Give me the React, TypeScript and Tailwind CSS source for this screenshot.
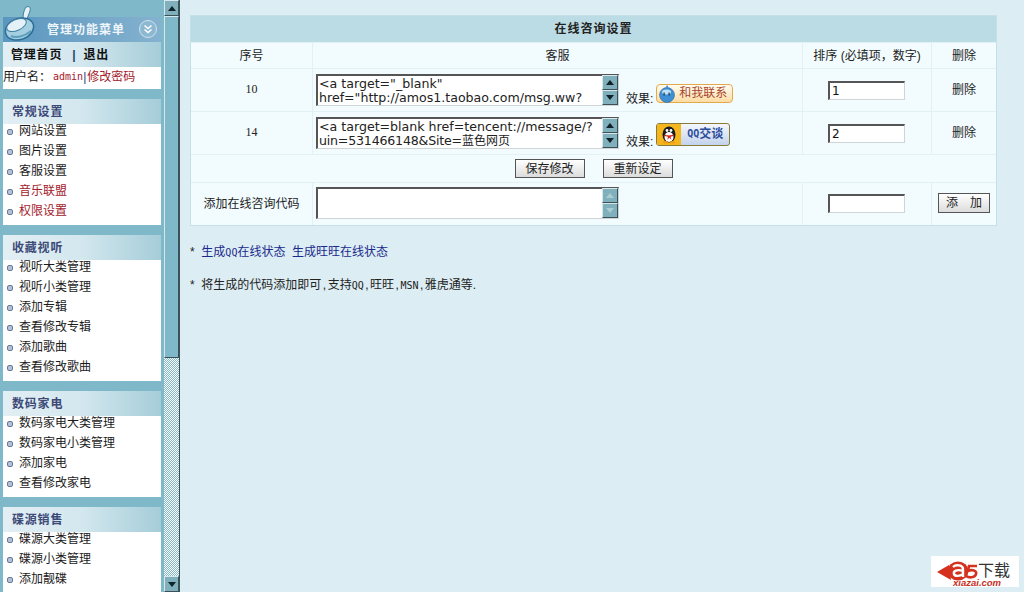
import React from "react";

const cjk = "font-['Liberation_Sans','Noto_Sans_CJK_SC',sans-serif]";
const mono = "font-['DejaVu_Sans_Mono',monospace] text-[10px] leading-none";

function Bowl() {
  return (
    <svg width="36" height="36" viewBox="0 0 36 36" className="absolute -left-[1px] -top-[12px]">
      <path d="M24 2c3-1 5 0 4 4l-3 8-4-1c0-4 1-8 3-11z" fill="#e8f3f6" stroke="#3f7da0" strokeWidth="1" />
      <ellipse cx="17.5" cy="24" rx="14.5" ry="10.5" fill="#a3cfe0" stroke="#2c6d96" strokeWidth="1.5" transform="rotate(-20 17.5 24)" />
      <ellipse cx="14.5" cy="20" rx="10.5" ry="5.5" fill="#e4f1f6" stroke="#3f7da0" strokeWidth="1" transform="rotate(-24 14.5 20)" />
      <path d="M9 31c5 2 13 1 20-5" fill="none" stroke="#5d9dbd" strokeWidth="2" />
    </svg>
  );
}

function Chevrons() {
  return (
    <span className="absolute right-[4px] top-[3px] flex h-[18px] w-[18px] items-center justify-center rounded-full border border-[#cfe3ee] bg-[#8db8d2]">
      <svg width="10" height="10" viewBox="0 0 10 10" fill="none" stroke="#ffffff" strokeWidth="1.5">
        <path d="M1.5 1.5 5 4.5 8.5 1.5" />
        <path d="M1.5 5.5 5 8.5 8.5 5.5" />
      </svg>
    </span>
  );
}

function Section({ title, items }: { title: string; items: { t: string; red?: boolean }[] }) {
  return (
    <div className="mx-[3px] mb-[10px] w-[158px] bg-white pb-[5px]">
      <div className="mb-[-4px] h-[25px] bg-gradient-to-r from-[#e2eff4] via-[#d3e7ee] to-[#a5cdd9] pl-[9px] pt-[5px] text-[12px] leading-[16px] font-bold tracking-[0.8px] text-[#3d4a78]">
        {title}
      </div>
      {items.map((it) => (
        <div key={it.t} className="relative flex h-[20px] items-center pl-[4px] text-[12px] leading-[20px]">
          <span className="mt-[4px] mr-[6px] h-[6px] w-[6px] shrink-0 rounded-[2px] border border-[#66799a] bg-[#b6c2d4]" />
          <span className={`mt-[1px] ${it.red ? "text-[#a3202c]" : "text-[#1c1c1c]"}`}>{it.t}</span>
        </div>
      ))}
    </div>
  );
}

function Arrow({ up, dim, size = 16 }: { up?: boolean; dim?: boolean; size?: number }) {
  return (
    <div
      className="flex w-full items-center justify-center border border-t-[#d6e8ec] border-l-[#d6e8ec] border-r-[#3c5058] border-b-[#3c5058] bg-[#7fb0bb]"
      style={{ height: size }}
    >
      <svg width="8" height="5" viewBox="0 0 8 5">
        <path d={up ? "M0 5 4 0l4 5z" : "M0 0h8L4 5z"} fill={dim ? "#a9cdd5" : "#10222a"} />
      </svg>
    </div>
  );
}

function FakeArea({ text, dim }: { text?: React.ReactNode; dim?: boolean }) {
  return (
    <div className="flex h-[32px] w-[303px] shrink-0 border-t-2 border-l-2 border-t-[#555] border-l-[#555] border-r border-b border-r-[#cfd4d6] border-b-[#cfd4d6] bg-white">
      <div className="w-[284px] overflow-hidden pl-[1px] pt-[1px] font-['DejaVu_Sans','Noto_Sans_CJK_SC',sans-serif] text-[12.6px] leading-[14px] text-[#222] whitespace-pre">
        {text}
      </div>
      <div className="-mt-[1px] ml-auto flex w-[16px] flex-col">
        <Arrow up dim={dim} />
        <Arrow dim={dim} />
      </div>
    </div>
  );
}

function Num({ v }: { v?: string }) {
  return (
    <div className="h-[19px] w-[77px] border-t-2 border-l-2 border-t-[#555] border-l-[#555] border-r border-b border-r-[#cfd4d6] border-b-[#cfd4d6] bg-white pl-[2px] text-left font-['DejaVu_Sans',sans-serif] text-[12px] leading-[16px] text-[#111]">
      {v}
    </div>
  );
}

function Btn({ children, w, h = 19 }: { children: React.ReactNode; w: number; h?: number }) {
  return (
    <button
      className="flex items-center justify-center border border-[#555] bg-gradient-to-b from-[#ffffff] to-[#dcdcdc] text-[12px] text-[#222]"
      style={{ width: w, height: h }}
    >
      {children}
    </button>
  );
}

function WwBadge() {
  return (
    <span className="relative flex h-[19px] w-[77px] items-center justify-end rounded-[4px] border border-[#e3a94f] bg-gradient-to-b from-[#fffdf2] to-[#fcdca4] pr-[5px] text-[12px] leading-none text-[#a8452a]">
      <svg width="18" height="18" viewBox="0 0 18 18" className="absolute left-[1px] top-0">
        <circle cx="9" cy="10" r="7.5" fill="#3f8fd4" stroke="#2b6ca8" strokeWidth="0.6" />
        <ellipse cx="8.5" cy="7" rx="4.5" ry="2.5" fill="#bfe2f7" />
        <path d="M9 0c1 1 1.5 2 1 3.5L7.5 3z" fill="#3f8fd4" />
        <rect x="5.5" y="7.5" width="1.2" height="3" fill="#12324f" />
        <rect x="10.5" y="7.5" width="1.2" height="3" fill="#12324f" />
      </svg>
      和我联系
    </span>
  );
}

function QqBadge() {
  return (
    <span className="flex h-[23px] w-[74px] overflow-hidden rounded-[3px] border border-[#8a7a3a] bg-gradient-to-b from-[#f4f7fd] to-[#c3d3ec]">
      <span className="flex h-full w-[24px] items-center justify-center bg-[#f5b51c]">
        <svg width="18" height="19" viewBox="0 0 18 19">
          <ellipse cx="9" cy="9.5" rx="6.5" ry="8" fill="#1b1b1b" />
          <ellipse cx="9" cy="12" rx="4.5" ry="5" fill="#ffffff" />
          <circle cx="7" cy="5.5" r="1.4" fill="#ffffff" />
          <circle cx="11" cy="5.5" r="1.4" fill="#ffffff" />
          <path d="M5 9.5c2 1.2 6 1.2 8 0l.5 1.6-3 .6 1 3-2.2-2-2 2 .7-3-3.2-.6z" fill="#d8261c" />
          <ellipse cx="5.5" cy="17.3" rx="2.6" ry="1.2" fill="#f59a12" />
          <ellipse cx="12.5" cy="17.3" rx="2.6" ry="1.2" fill="#f59a12" />
        </svg>
      </span>
      <span className="flex flex-1 items-center justify-center text-[12px] font-bold leading-none text-[#2c4d9b]">
        <span className={`${mono} font-bold`}>QQ</span>交谈
      </span>
    </span>
  );
}

const cellBase = "bg-[#f2fcff] p-0 text-center align-middle";
const comma = "px-[1.5px]";

export default function App() {
  return (
    <div className={`flex h-[592px] w-[1024px] overflow-hidden bg-[#dcedf3] text-[12px] ${cjk}`}>
      {/* sidebar */}
      <aside className="h-[592px] w-[164px] shrink-0 overflow-hidden bg-[#7fb9c9] pt-[17px]">
        <div className="relative mx-[3px] h-[25px] w-[158px] bg-gradient-to-r from-[#5a96bf] to-[#85b2cf] pl-[44px] pt-[1px] text-[12px] leading-[25px] font-bold tracking-[1px] text-[#eef6fa]">
          <Bowl />
          <Chevrons />
          管理功能菜单
        </div>
        <div className="mx-[3px] mb-[10px] h-[47px] w-[158px] bg-white">
          <div className="flex h-[25px] items-center bg-gradient-to-r from-[#e2eff4] via-[#d3e7ee] to-[#a5cdd9] pl-[8px] pt-[1px] text-[12px] font-bold tracking-[0.8px] text-[#111]">
            管理首页<span className="ml-[10px] mr-[7px] text-[#24466e]">|</span>退出
          </div>
          <div className="flex h-[19px] items-center whitespace-nowrap text-[12px] text-[#1c1c1c]">
            用户名：<span className={`ml-[2px] ${mono} text-[#a3202c]`}>admin</span>
            <span className="text-[#24466e]">|</span>
            <span className="ml-[1px] text-[#a3202c]">修改密码</span>
          </div>
        </div>
        <Section title="常规设置" items={[{ t: "网站设置" }, { t: "图片设置" }, { t: "客服设置" }, { t: "音乐联盟", red: true }, { t: "权限设置", red: true }]} />
        <Section title="收藏视听" items={[{ t: "视听大类管理" }, { t: "视听小类管理" }, { t: "添加专辑" }, { t: "查看修改专辑" }, { t: "添加歌曲" }, { t: "查看修改歌曲" }]} />
        <Section title="数码家电" items={[{ t: "数码家电大类管理" }, { t: "数码家电小类管理" }, { t: "添加家电" }, { t: "查看修改家电" }]} />
        <Section title="碟源销售" items={[{ t: "碟源大类管理" }, { t: "碟源小类管理" }, { t: "添加靓碟" }]} />
      </aside>

      {/* page scrollbar */}
      <div className="flex h-[592px] w-[16px] shrink-0 flex-col border-r border-[#3c5058] bg-[repeating-conic-gradient(#7fb9c9_0_25%,#ffffff_0_50%)] bg-[length:2px_2px]">
        <Arrow up />
        <div className="h-[342px] border border-t-[#d6e8ec] border-l-[#d6e8ec] border-r-[#3c5058] border-b-[#3c5058] bg-[#7fb9c9]" />
        <div className="flex-1" />
        <Arrow />
      </div>

      {/* main */}
      <main className="relative flex-1 pl-[10px] pt-[15px]">
        <table className="w-[807px] table-fixed border-separate border-spacing-[1px] bg-[#e2f1f5] text-[12px] text-[#222] shadow-[inset_0_0_0_1px_#c4e0e8]">
          <colgroup>
            <col className="w-[121px]" />
            <col className="w-[489px]" />
            <col className="w-[128px]" />
            <col />
          </colgroup>
          <tbody>
            <tr className="h-[26px]">
              <td colSpan={4} className="bg-[#bbdce5] text-center font-bold tracking-[1px] text-[#222]">在线咨询设置</td>
            </tr>
            <tr className="h-[25px]">
              <td className={cellBase}>序号</td>
              <td className={cellBase}>客服</td>
              <td className={cellBase}>排序 (必填项，数字)</td>
              <td className={cellBase}>删除</td>
            </tr>
            <tr className="h-[42px]">
              <td className={`${cellBase} pb-[2px] font-['Liberation_Serif',serif]`}>10</td>
              <td className={`${cellBase} text-left`}>
                <div className="flex items-start pl-[3px]">
                  <FakeArea text={'<a target="_blank"\nhref="http://amos1.taobao.com/msg.ww?'} />
                  <span className="ml-[7px] mt-[17px] leading-[16px]">效果:</span>
                  <span className="ml-[3px] mt-[10px]"><WwBadge /></span>
                </div>
              </td>
              <td className={cellBase}><div className="flex justify-center pr-[1px]"><Num v="1" /></div></td>
              <td className={`${cellBase} pb-[1px]`}>删除</td>
            </tr>
            <tr className="h-[42px]">
              <td className={`${cellBase} pb-[2px] font-['Liberation_Serif',serif]`}>14</td>
              <td className={`${cellBase} text-left`}>
                <div className="flex items-start pl-[3px]">
                  <FakeArea
                    text={
                      <>
                        {"<a target=blank href=tencent://message/?\n"}
                        <span className="tracking-[-0.2px]">uin=531466148&amp;Site=</span>
                        <span className="text-[12px]">蓝色网页</span>
                      </>
                    }
                  />
                  <span className="ml-[7px] mt-[17px] leading-[16px]">效果:</span>
                  <span className="ml-[3px] mt-[6px]"><QqBadge /></span>
                </div>
              </td>
              <td className={cellBase}><div className="flex justify-center pr-[1px]"><Num v="2" /></div></td>
              <td className={`${cellBase} pb-[1px]`}>删除</td>
            </tr>
            <tr className="h-[27px]">
              <td colSpan={4} className={cellBase}>
                <div className="flex justify-center gap-[18px]">
                  <Btn w={70}>保存修改</Btn>
                  <Btn w={70}>重新设定</Btn>
                </div>
              </td>
            </tr>
            <tr className="h-[42px]">
              <td className={cellBase}>添加在线咨询代码</td>
              <td className={`${cellBase} pb-[2px] text-left`}>
                <div className="flex pl-[3px]"><FakeArea dim /></div>
              </td>
              <td className={`${cellBase} pb-[2px]`}><div className="flex justify-center pr-[1px]"><Num /></div></td>
              <td className={`${cellBase} pb-[2px]`}><div className="flex justify-center"><Btn w={52} h={20}>添　加</Btn></div></td>
            </tr>
          </tbody>
        </table>

        <p className="mt-[17px] leading-[18px] text-[#222]">
          *&nbsp;&nbsp;<span className="text-[#1a2a8c]">生成<span className={mono}>QQ</span>在线状态</span>&nbsp;&nbsp;<span className="text-[#1a2a8c]">生成旺旺在线状态</span>
        </p>
        <p className="mt-[15px] leading-[18px] text-[#222]">
          *&nbsp;&nbsp;将生成的代码添加即可<span className={comma}>,</span>支持<span className={mono}>QQ</span><span className={comma}>,</span>旺旺<span className={comma}>,</span><span className={mono}>MSN</span><span className={comma}>,</span>雅虎通等.
        </p>

        {/* watermark */}
        <div className="absolute bottom-[5px] right-[5px] h-[31px] w-[88px] bg-white">
          <svg width="48" height="26" viewBox="0 0 48 26" className="absolute left-0 top-0">
            <path d="M6 16 18 9 20 24z" fill="#d4321f" />
            <ellipse cx="27" cy="15" rx="10.5" ry="9.5" fill="#d4321f" />
            <path d="M22 11C25 8 32 9 32 13V21M32 15C26 13 22 15 23 18 24 21 29 20 32 18" fill="none" stroke="#ffffff" strokeWidth="2.4" />
            <path d="M46 10H38L37 15C42 13 46 15 45 18 44 22 38 22 35 20" fill="none" stroke="#d4321f" strokeWidth="2.6" />
          </svg>
          <span className="absolute left-[47px] top-[6px] text-[16px] leading-[18px] text-[#333]">下载</span>
          <span className="absolute left-[22px] top-[22px] font-['Liberation_Sans',sans-serif] text-[9.5px] leading-[9px] font-bold italic text-[#c9301f]">xiazai.com</span>
        </div>
      </main>
    </div>
  );
}
